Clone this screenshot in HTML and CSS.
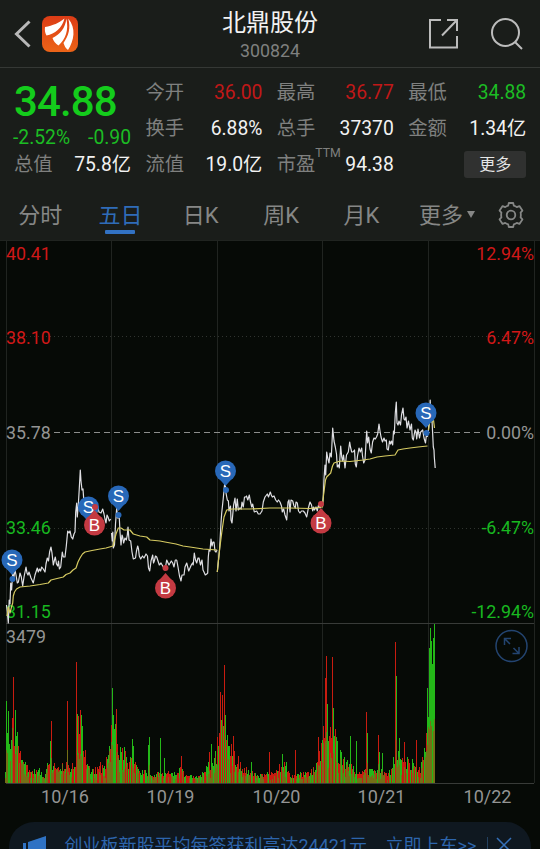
FILE: index.html
```html
<!DOCTYPE html>
<html lang="zh-CN">
<head>
    <meta charset="UTF-8">
    <meta name="viewport" content="width=device-width, initial-scale=1.0">
    <title>北鼎股份 300824</title>
    <link rel="stylesheet" href="styles.css">
</head>
<body>
    <div class="app">
        <!-- Header -->
        <header class="header">
            <div class="header-left">
                <svg class="back" width="18" height="28" viewBox="0 0 18 28"><path d="M15.5 1.5L2.5 14l13 12.5"/></svg>
                <svg class="logo" width="36" height="36" viewBox="0 0 36 36">
                    <defs>
                        <linearGradient id="logoBg" x1="0" y1="0" x2="0" y2="1">
                            <stop offset="0" stop-color="#dc3c16"/>
                            <stop offset="1" stop-color="#ec6418"/>
                        </linearGradient>
                    </defs>
                    <rect width="36" height="36" rx="8" fill="url(#logoBg)"/>
                    <path class="feather" d="M22.500 2.500C17 7 11 9.500 3 11C2.600 14 3 17 4.500 19.500C13 18 20 12 22.500 2.500Z"/>
                    <path class="feather" d="M24.300 2.500C23.500 12 18 18.500 10.500 22C11.500 25 13.500 28 16.500 29.500C23.500 23 27 14 24.300 2.500Z"/>
                    <path class="feather" d="M26.200 2.500C29 12 26.500 20 21.500 27C22.500 30 23.500 32 26 34C32 25 34.500 12 26.200 2.500Z"/>
                </svg>
            </div>
            <div class="header-title">
                <h1>北鼎股份</h1>
                <span>300824</span>
            </div>
            <div class="header-right">
                <svg width="32" height="32" viewBox="0 0 32 32"><path d="M13 2H2v27.500h27V18M19 2h10v11M29 2L14 17.500"/></svg>
                <svg width="34" height="34" viewBox="0 0 34 34"><circle cx="15.500" cy="15.500" r="13.500"/><path d="M25 25l7 7"/></svg>
            </div>
        </header>

        <!-- Quote summary -->
        <section class="quote">
            <div class="quote-col quote-main">
                <div class="price">34.88</div>
                <div class="pair down"><span>-2.52%</span><span>-0.90</span></div>
                <div class="pair"><label>总值</label><span>75.8亿</span></div>
            </div>
            <div class="quote-col">
                <div class="pair"><label>今开</label><span class="up">36.00</span></div>
                <div class="pair"><label>换手</label><span>6.88%</span></div>
                <div class="pair"><label>流值</label><span>19.0亿</span></div>
            </div>
            <div class="quote-col">
                <div class="pair"><label>最高</label><span class="up">36.77</span></div>
                <div class="pair"><label>总手</label><span>37370</span></div>
                <div class="pair"><label>市盈<sup>TTM</sup></label><span>94.38</span></div>
            </div>
            <div class="quote-col">
                <div class="pair"><label>最低</label><span class="down">34.88</span></div>
                <div class="pair"><label>金额</label><span>1.34亿</span></div>
                <div class="pair"><button class="more-btn">更多</button></div>
            </div>
        </section>

        <!-- Period tabs -->
        <nav class="tabs">
            <span>分时</span>
            <span class="active">五日</span>
            <span>日K</span>
            <span>周K</span>
            <span>月K</span>
            <span>更多<i class="caret"></i></span>
            <svg class="gear" width="28" height="28" viewBox="0 0 28 28">
                <path d="M11.200 4.600L11.800 2h4.400l.6 2.600q1.700.5 3 1.500l2.600-1 3 4.500-1.800 2q.5 2.400 0 4.800l1.800 2-3 4.500-2.600-1q-1.300 1-3 1.500l-.6 2.600h-4.400l-.6-2.600q-1.700-.5-3-1.500l-2.600 1-3-4.500 1.800-2q-.5-2.400 0-4.800l-1.800-2 3-4.500 2.600 1q1.300-1 3-1.500z"/>
                <circle cx="14" cy="14" r="4.300"/>
            </svg>
        </nav>

        <!-- Five day chart -->
        <main class="chart">
            <svg width="540" height="570" viewBox="0 240 540 570">
                <g class="grid">
                    <path d="M0 240.500H540M6.500 240V783M111.500 240V783M217.500 240V783M322.500 240V783M428.500 240V783M534.500 240V783"/>
                    <path class="dots" d="M6 336.500H534M6 528.500H534"/>
                    <path class="edge" d="M6 623.500H534M6 783.500H534"/>
                    <path class="zero" d="M54 432.500H484"/>
                </g>
                <g id="volume" shape-rendering="crispEdges"></g>

                <g class="scale">
                    <text class="up" x="6" y="260">40.41</text>
                    <text class="up" x="6" y="343.500">38.10</text>
                    <text x="6" y="439">35.78</text>
                    <text class="down" x="6" y="534">33.46</text>
                    <text class="down" x="6" y="618">31.15</text>
                    <text x="6" y="642.500">3479</text>
                    <g text-anchor="end">
                        <text class="up" x="534" y="260">12.94%</text>
                        <text class="up" x="534" y="343.500">6.47%</text>
                        <text x="534" y="439">0.00%</text>
                        <text class="down" x="534" y="534">-6.47%</text>
                        <text class="down" x="534" y="618">-12.94%</text>
                    </g>
                    <g class="dates" text-anchor="middle">
                        <text x="65" y="803">10/16</text>
                        <text x="170.500" y="803">10/19</text>
                        <text x="276.500" y="803">10/20</text>
                        <text x="381.500" y="803">10/21</text>
                        <text x="487.500" y="803">10/22</text>
                    </g>
                </g>

                <g class="line">
                    <polyline points="6.500,605 7.500,614 8.300,623 9.200,600 10,604 10.700,583 11.600,590 12.700,573 13.800,578 15,570 16,575 17.300,583 18.400,582 20,573 21.300,577 22.700,586 24,577 26,567 27,573 28,575 29,572 31,578 33.300,583 35,575 37.300,568 38.300,572 39.500,569 40.600,571 41.700,567 43.300,569 45,572 46,564 47.300,558 48.500,561 49.600,552 51,547 52,553 53.300,565 54.500,560 55.300,557 56.500,564 57.700,566 58.500,561 59.400,569 60.700,567 62.300,552 63.300,557 65,557 66.300,546 67.700,531 69,533 70,531 71.300,537 72.700,539 74,534 75,532 75.700,512 76.700,503 77.300,517 78.300,505 79.200,490 80.300,470 81,481 82,490 83,489 84,503 86,507 88,515 90,509 92,518 95,508 96.500,513 98,508 99,512 101,513 102.700,509 104,514 105,519 106,523 107,515 108,517 109.300,521 110.700,519"/>
                    <polyline points="111.500,533 112.300,541 112.800,532 113.300,548 114.500,545 115.500,524 116.700,508 117.500,518 119.300,518 120,532 121,545 122,535 122.700,537 123.600,543 125,538 126.300,540 127.300,535 128,527 129,540 130.700,541 132,552 133.300,559 135.500,558 136.500,551 137.700,546 138.500,549 139.300,556 140.700,559 142.500,556 144,558 146,554 147.500,556 148.500,568 149.700,571 151,561 152.700,555 153.500,563 154.300,561 155.500,556 156.700,557 158,561 159.300,565 161,563 163.300,567 165,570 166.700,560 169,565 171.300,561 172.700,563 174,567 175.300,560 176.700,560 178,567 179.500,576 181,581 182,575 184,575 185,567 186.700,563 188.700,571 190,568 191.300,565 192.500,563 193.200,565 194.300,553 195.500,560 196.700,563 198,558 199,558 200.500,565 202,560 203,570 204,572 205.300,575 206.700,574 207.700,573 208.300,557 209,550 210,551 211,539 212,546 213,542 214,542 215,551 216,552 217,550"/>
                    <polyline points="217.300,572 219.500,550 221,523 221.700,513 223.200,499 225,480 226,493 227.300,500 228.400,501 229,511 230.500,506 231,520 232,523 233.600,505 235,498 236,511 237.300,499 238.300,510 240,508 241.200,509 242,502 243.300,507 244.500,497 245.700,497 246.500,496 247.800,500 249.300,495 250.300,501 251.700,507 252.700,504 254.300,512 256.700,511 258.300,514 260,514 262,511 263.300,502 265,497 267.300,494 268.500,497 270.300,492 271.300,495 272.300,497 274,496 275.700,500 277.200,502 278.500,500 280,502 281.500,506 282.300,512 283.600,509 285,515 286.700,520 288,502 289,500 290,512 291,500 292.700,501 294,506 295.300,508 296,502 297.300,503 298.500,511 300,513 301.500,511 303.300,511 305,513 306.700,517 308.400,508 310,502 311.500,505 312.700,511 313.600,507 314.500,510 316,507 317.300,511 318.500,505 320,508 321.500,503"/>
                    <polyline points="322.500,505 323.300,497 324,479 325,465 325.700,475 326.700,452 327.700,458 329,463 330,453 331.300,457 332,443 332.700,428 334,441 335.300,447 336.500,454 337.300,467 338.600,465 339.300,468 340.700,446 341.700,457 342.500,461 343.500,455 345,468 346.500,455 348.300,452 349.700,442 350.500,447 351.700,452 353,452 354.500,450 355.300,464 356.300,467 357.500,456 359,448 360.300,452 361.700,448 362.500,456 363.700,463 365,460 366.700,431 367.600,443 368.700,437 370,449 371.300,453 372.600,442 374,438 375.300,439 376.500,437 377.700,434 379,424 380,431 381,437 382.500,442 384,438 385,441 386.300,440 387,449 388.300,450 389.500,441 390.500,444 391.500,441 392.700,445 393.500,431 394.300,434 395.300,413 396.300,402 397,423 398,425 399,421 400.500,425 401.500,415 403,408 404,419 405,420 406,417 407,428 408.500,421 410,430 411.500,424 412.300,438 413.300,440 415,430 416,432 416.700,439 418,429 419.500,438 420.700,432 422.700,430 424,438 425.500,443 426.500,434 427.500,437"/>
                    <polyline points="428.300,433 429,420 430.200,400 431,418 432,420 433.300,447 434,450 434.300,457 435.200,468"/>
                </g>
                <g class="average">
                    <polyline points="7,616 8.300,607 10,613 11.500,607 12.700,603 13.300,596 14.500,592 16.500,589 20,587 30,586 40,584.500 48.300,583 51,580 55,579 63.300,577 66,574.500 70,573 73,570 76,568 78,562 80,558 82.500,554 85,552 92,550.500 100,549 106,548 113,546 116,534 118.300,528 121,528 124,530 130,530 133.300,534 140,536 146.700,537 150,540 160,541 165,542 176,544 183,546 190,547 203,549 217,550"/>
                    <polyline points="217.300,572 219.500,550 221.700,533 224,517 226.700,510 232,509 250,509 270,508 290,508 310,508.500 322.500,507 323.300,497 324.200,490 325.500,480 326.700,477 330.700,473 332.500,466 334,463 340,461 350,461.500 363,460 370,459 377,457 385,456 395,455 398,450 403,449 410,448 418,447 427.500,446"/>
                    <polyline points="428.500,430 430,420 432,422 433.500,420 434.500,428"/>
                </g>
                <g class="markers" id="markers"></g>
                <g class="expand">
                    <circle cx="511.500" cy="646" r="15.500"/>
                    <path d="M504.500 645v-6.500h6.500M505 639l5 5M519 647v6.500h-6.500M518.500 653l-5-5"/>
                </g>
            </svg>
        </main>

        <!-- Bottom notice -->
        <footer class="notice">
            <svg class="horn" width="24" height="28" viewBox="0 0 24 28"><path d="M0 8h3v13H0zM5 7l18-6v26L5 21z"/></svg>
            <p>创业板新股平均每签获利高达24421元</p>
            <a>立即上车&gt;&gt;</a>
            <svg class="close" width="16" height="16" viewBox="0 0 16 16"><path d="M1 1l14 14M15 1L1 15"/></svg>
        </footer>
    </div>
    <script src="chart.js"></script>
</body>
</html>
```
FILE: styles.css
```css
/* General Styles */
* {
    box-sizing: border-box;
}

html, body {
    height: 100%;
    margin: 0;
    overflow: hidden;
    background-color: #060a06;
    font-family: Roboto, "Noto Sans CJK SC", sans-serif;
}

.app {
    display: flex;
    flex-direction: column;
    width: 540px;
    height: 849px;
    overflow: hidden;
}

svg {
    display: block;
    flex: none;
    fill: none;
}

/* Header */
.header {
    display: grid;
    grid-template-columns: 150px 1fr 150px;
    flex: none;
    height: 68px;
    background: #1a1d1a;
    border-bottom: 1px solid #353835;
}

.header-left,
.header-right {
    display: flex;
    align-items: center;
}

.header-left {
    gap: 10px;
    padding-left: 14px;
}

.header-right {
    justify-content: flex-end;
    gap: 30px;
    padding: 1px 16px 0 0;
    stroke: #bcbcbc;
    stroke-width: 2;
}

.back {
    stroke: #b8b8b8;
    stroke-width: 3;
}

.feather {
    fill: #fff;
}

.header-title {
    display: flex;
    flex-direction: column;
    align-items: center;
    padding-top: 8px;
}

.header-title h1 {
    margin: 0;
    color: #f2f2f2;
    font-size: 24px;
    font-weight: 400;
    line-height: 30px;
}

.header-title span {
    color: #7f807f;
    font-size: 17.8px;
    line-height: 26px;
}

/* Quote */
.quote {
    display: grid;
    grid-template-columns: 117px 117px 117px 118px;
    column-gap: 14.4px;
    flex: none;
    height: 124px;
    padding: 7px 0 0 14px;
    background: #1a1d1a;
    color: #f2f2f2;
    font-size: 19.3px;
}

.pair {
    display: flex;
    align-items: center;
    justify-content: space-between;
    height: 35.7px;
    padding-top: 1px;
    line-height: 24px;
    white-space: nowrap;
}

.pair label {
    color: #7f807f;
}

.pair sup {
    position: relative;
    top: -6px;
    font-size: 12.3px;
    line-height: 0;
}

.quote-main .price {
    height: 48px;
    padding-top: 6px;
    color: #14cc1c;
    font-size: 42px;
    font-weight: 500;
    letter-spacing: -0.9px;
    line-height: 42px;
}

.quote-main .pair {
    height: 30px;
}

.quote-main .pair.down {
    height: 24px;
    margin-top: 2px;
    margin-left: -1px;
}

.pair .up,
.pair.up {
    color: #c01818;
}

.pair .down,
.pair.down {
    color: #1cbc24;
}

.more-btn {
    width: 62px;
    height: 27px;
    margin-left: auto;
    padding: 0;
    border: none;
    border-radius: 3px;
    background: #303130;
    color: #e6e6e6;
    font: inherit;
    font-size: 16px;
    line-height: 26px;
}

/* Tabs */
.tabs {
    display: grid;
    grid-template-columns: repeat(5, 80.3px) 91px 37px;
    flex: none;
    height: 48px;
    background: #1a1d1a;
    color: #868786;
    font-size: 22px;
    line-height: 48px;
    text-align: center;
}

.tabs .active {
    display: flex;
    flex-direction: column;
    align-items: center;
    color: #2f6cb8;
}

.tabs .active::after {
    content: "";
    width: 30px;
    height: 4px;
    margin-top: -10px;
    border-radius: 1px;
    background: #3272c4;
}

.caret {
    display: inline-block;
    margin: 0 0 5px 4px;
    border: 4px solid transparent;
    border-top: 7px solid #868786;
    border-bottom: 0;
}

.gear {
    align-self: center;
    justify-self: center;
    margin-bottom: 3px;
    stroke: #868786;
    stroke-width: 1.8;
    stroke-linejoin: round;
}

/* Chart */
.chart {
    flex: none;
    height: 570px;
}

.grid path {
    stroke: #202420;
}

.grid .edge {
    stroke: #383b38;
}

.grid .dots {
    stroke: #303430;
    stroke-dasharray: 1 3;
}

.grid .zero {
    stroke: #8c8e8c;
    stroke-dasharray: 6 4;
}

.scale {
    fill: #949594;
    font-size: 17.8px;
}

.scale .up {
    fill: #d01818;
}

.scale .down {
    fill: #18b820;
}

.dates {
    font-size: 18px;
}

.line {
    stroke: #dfdfe3;
    stroke-width: 1.2;
    stroke-linejoin: round;
}

.average {
    stroke: #d6cb62;
    stroke-width: 1.2;
    stroke-linejoin: round;
}

.markers text {
    fill: #fff;
    font-family: "Liberation Sans", Arial, sans-serif;
    font-size: 17px;
    text-anchor: middle;
}

.sell {
    fill: #2868b8;
}

.buy {
    fill: #c43a42;
}

.expand {
    stroke: #234470;
    stroke-width: 1.5;
}

/* Notice */
.notice {
    display: flex;
    align-items: center;
    flex: none;
    height: 54px;
    margin: 12px 9px 0;
    padding-left: 14px;
    overflow: hidden;
    border-radius: 25px;
    background: #0f1820;
    color: #2d65ad;
    font-size: 18px;
    line-height: 46px;
    white-space: nowrap;
}

.notice p {
    width: 321px;
    margin: 0 0 6px 17.5px;
}

.notice a {
    margin-bottom: 6px;
}

.horn {
    margin-bottom: 1px;
    fill: #2f72c4;
}

.close {
    box-sizing: content-box;
    margin: 0 0 8px 11px;
    padding-left: 8px;
    border-left: 1px solid #24415f;
    stroke: #3570b8;
    stroke-width: 1.5;
}
```
FILE: chart.js
```js
const NS = 'http://www.w3.org/2000/svg';

function add(parent, tag, attrs) {
    const el = document.createElementNS(NS, tag);
    for (const key in attrs) el.setAttribute(key, attrs[key]);
    parent.appendChild(el);
    return el;
}

// Volume level along the five sessions: [x, height]
const levels = [
    [5, 18], [7, 64], [10, 56], [13, 54], [16, 48], [20, 24], [24, 20], [30, 10], [37, 14], [45, 8],
    [49, 30], [52, 22], [55, 16], [66, 20], [70, 18], [75, 16], [77, 66], [81, 64], [84, 30], [90, 14],
    [100, 14], [105, 18], [109, 36], [112, 66], [117, 45], [119, 28], [123, 34], [127, 20], [133, 28],
    [138, 12], [150, 10], [165, 9], [178, 12], [181, 18], [184, 8], [200, 7], [208, 18], [214, 24],
    [219, 42], [223, 86], [226, 66], [230, 34], [237, 22], [245, 14], [260, 8], [275, 11], [283, 22],
    [290, 7], [305, 10], [315, 15], [320, 32], [324, 75], [328, 60], [334, 55], [338, 32], [345, 22], [355, 12],
    [390, 12], [395, 32], [402, 24], [412, 20], [420, 14], [425, 38], [428, 90], [430, 145], [432, 120], [435, 158]
];

// Single large trades: [x, height, colour]
const spikes = [
    [6, 82, 'g'], [13, 106, 'r'], [15, 73, 'g'], [17, 51, 'g'], [20, 32, 'r'], [50, 42, 'g'], [51, 62, 'r'],
    [67, 82, 'r'], [76, 121, 'r'], [77, 69, 'g'], [80, 73, 'r'], [81, 68, 'g'], [85, 33, 'r'], [100, 21, 'r'],
    [112, 95, 'g'], [113, 68, 'g'], [116, 74, 'r'], [120, 36, 'g'], [124, 34, 'g'], [132, 44, 'g'], [133, 37, 'g'],
    [148, 38, 'g'], [149, 46, 'g'], [160, 45, 'g'], [164, 25, 'g'], [181, 27, 'r'], [209, 31, 'r'],
    [211, 39, 'g'], [217, 46, 'r'], [220, 91, 'r'], [222, 88, 'r'], [224, 118, 'r'], [225, 68, 'g'], [233, 47, 'r'],
    [238, 27, 'r'], [251, 21, 'g'], [269, 31, 'r'], [282, 29, 'g'], [286, 21, 'g'], [295, 33, 'r'],
    [318, 46, 'r'], [325, 105, 'r'], [326, 127, 'r'], [327, 79, 'g'], [332, 126, 'r'], [333, 75, 'g'],
    [337, 42, 'g'], [344, 26, 'g'], [350, 47, 'g'], [356, 42, 'g'], [366, 71, 'r'], [367, 50, 'g'],
    [378, 48, 'r'], [379, 31, 'g'], [382, 30, 'g'], [395, 141, 'r'], [396, 107, 'g'], [399, 45, 'g'],
    [404, 41, 'r'], [412, 24, 'g'], [416, 43, 'r'], [424, 35, 'g'], [427, 95, 'g'], [429, 135, 'g'], [430, 155, 'g'],
    [431, 142, 'g'], [432, 119, 'g'], [433, 130, 'g'], [434, 159, 'g']
];

const colors = { r: '#c81c10', g: '#24b818', m: '#757016' };
const volume = document.getElementById('volume');
const base = 783;

function bar(x, h, color) {
    add(volume, 'rect', { x: x, y: base - h, width: 1, height: h, fill: colors[color] });
}

function levelAt(x) {
    const i = Math.max(1, levels.findIndex(p => p[0] >= x));
    const [x0, h0] = levels[i - 1];
    const [x1, h1] = levels[i];
    return h0 + (h1 - h0) * (x - x0) / (x1 - x0);
}

let seed = 24;
function random() {
    seed = (seed * 16807) % 2147483647;
    return seed / 2147483647;
}

for (let x = 5; x < 435; x++) {
    const level = levelAt(x);
    const outer = Math.round(level * (0.6 + 0.6 * random()));
    const inner = Math.round(outer * (0.35 + 0.6 * random()));
    const green = random() < (x > 426 ? 0.85 : 0.45);
    bar(x, outer, green ? 'g' : 'r');
    bar(x, inner, random() < 0.55 ? 'm' : (green ? 'g' : 'r'));
}

spikes.forEach(([x, h, color]) => {
    bar(x, h, color);
    bar(x, Math.round(h * 0.4), random() < 0.5 ? 'm' : color);
});

// Trade pins: [x, y, side, point x, point y]
const trades = [
    [12, 560, 'S', 12.5, 579], [88.500, 507, 'S', 95, 506], [94.500, 525, 'B', 95, 507], [118.500, 496, 'S', 118.500, 515],
    [165.500, 588, 'B', 165.500, 568], [225.500, 471, 'S', 226, 490], [321, 523, 'B', 321, 504], [426, 413, 'S', 426.500, 433]
];

const markers = document.getElementById('markers');
trades.forEach(([x, y, side, px, py]) => {
    const g = add(markers, 'g', { class: side === 'S' ? 'sell' : 'buy' });
    const dir = side === 'S' ? 1 : -1;
    add(g, 'circle', { cx: px, cy: py, r: 3 });
    add(g, 'path', { d: `M${x - 7} ${y + dir * 7}L${x} ${y + dir * 15}L${x + 7} ${y + dir * 7}Z` });
    add(g, 'circle', { cx: x, cy: y, r: 10.5 });
    add(g, 'text', { x: x, y: y + 6 }).textContent = side;
});
```
